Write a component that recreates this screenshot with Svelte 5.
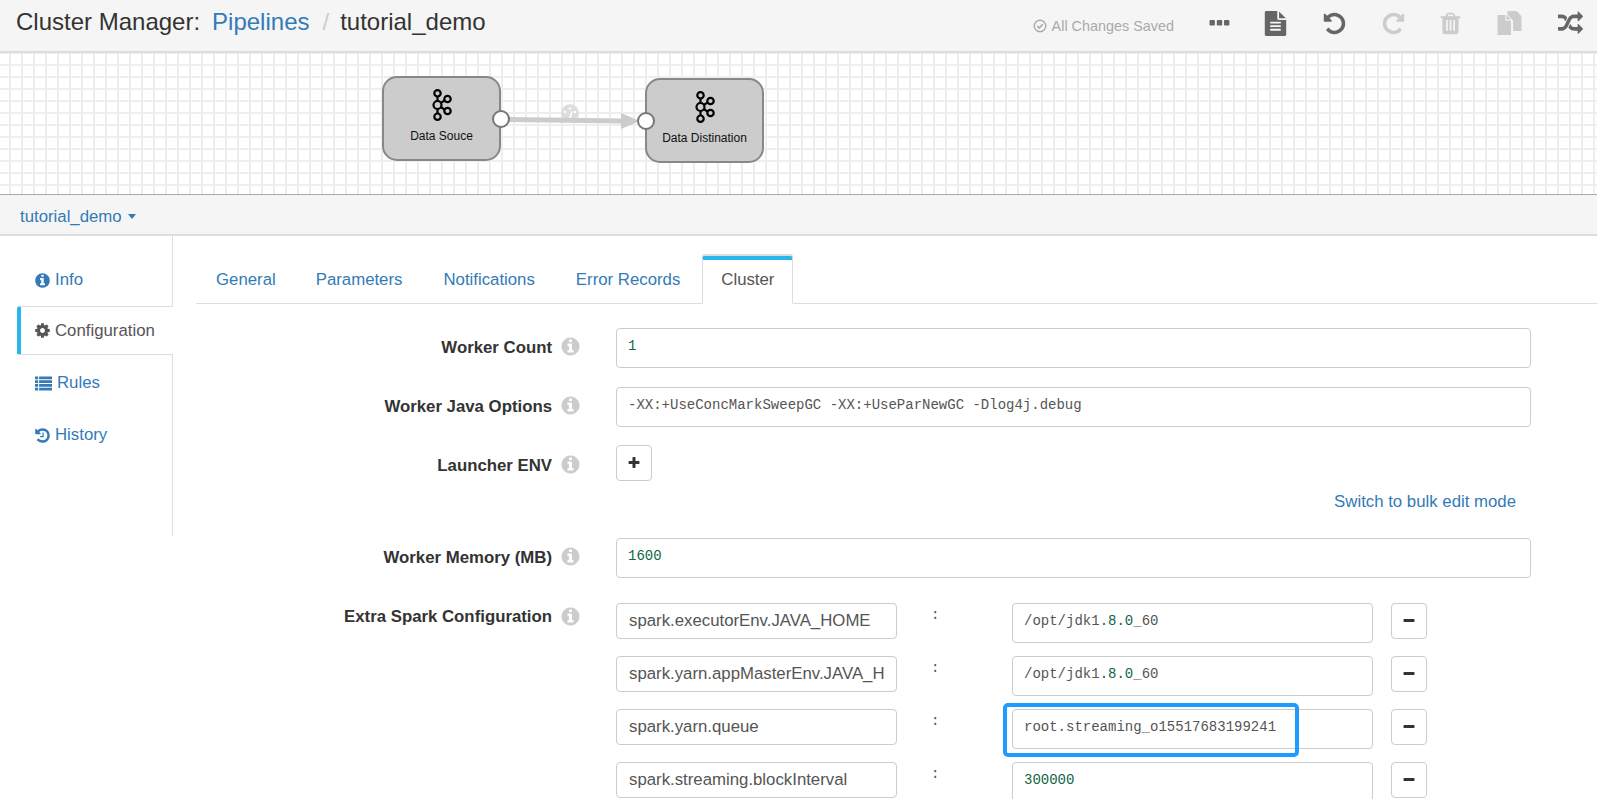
<script>
  const icons = {
    info: "M1152 1376v-160q0-14-9-23t-23-9h-96v-512q0-14-9-23t-23-9h-320q-14 0-23 9t-9 23v160q0 14 9 23t23 9h96v320h-96q-14 0-23 9t-9 23v160q0 14 9 23t23 9h448q14 0 23-9t9-23zm-128-896v-160q0-14-9-23t-23-9h-192q-14 0-23 9t-9 23v160q0 14 9 23t23 9h192q14 0 23-9t9-23zm640 416q0 209-103 385.5t-279.5 279.5-385.5 103-385.5-103-279.5-279.5-103-385.5 103-385.5 279.5-279.5 385.5-103 385.5 103 279.5 279.5 103 385.5z",
    cog: "M1152 896q0-106-75-181t-181-75-181 75-75 181 75 181 181 75 181-75 75-181zm512-109v222q0 12-8 23t-20 13l-185 28q-19 54-39 91 35 50 107 138 10 12 10 25t-9 23q-27 37-99 108t-94 71q-12 0-26-9l-138-108q-44 23-91 38-16 136-29 186-7 28-36 28h-222q-14 0-24.5-8.5t-11.5-21.5l-28-184q-49-16-90-37l-141 107q-10 9-25 9-14 0-25-11-126-114-165-168-7-10-7-23 0-12 8-23 15-21 51-66.5t54-70.5q-27-50-41-99l-183-27q-13-2-21-12.5t-8-23.5v-222q0-12 8-23t19-13l186-28q14-46 39-92-40-57-107-138-10-12-10-24 0-10 9-23 26-36 98.5-107.5t94.5-71.5q13 0 26 10l138 107q44-23 91-38 16-136 29-186 7-28 36-28h222q14 0 24.5 8.5t11.5 21.5l28 184q49 16 90 37l142-107q9-9 24-9 13 0 25 10 129 119 165 170 7 8 7 22 0 12-8 23-15 21-51 66.5t-54 70.5q26 50 41 98l183 28q13 2 21 12.5t8 23.5z",
    list: "M0 158h330v290h-330zM435 158h1357v290h-1357zM0 553h330v290h-330zM435 553h1357v290h-1357zM0 948h330v290h-330zM435 948h1357v290h-1357zM0 1343h330v290h-330zM435 1343h1357v290h-1357z",
    undo: "M1664 896q0 156-61 298t-164 245-245 164-298 61q-172 0-327-72.5t-264-204.5q-7-10-6.5-22.5t8.5-20.5l137-138q10-9 25-9 16 2 23 12 73 95 179 147t225 52q104 0 198.5-40.5t163.5-109.5 109.5-163.5 40.5-198.5-40.5-198.5-109.5-163.5-163.5-109.5-198.5-40.5q-98 0-188 35.5t-160 101.5l137 138q31 30 14 69-17 40-59 40h-448q-26 0-45-19t-19-45v-448q0-42 40-59 39-17 69 14l130 129q107-101 244.5-156.5t284.5-55.5q156 0 298 61t245 164 164 245 61 298z",
    history: "M1664 896q0 156-61 298t-164 245-245 164-298 61q-172 0-327-72.5t-264-204.5q-7-10-6.5-22.5t8.5-20.5l137-138q10-9 25-9 16 2 23 12 73 95 179 147t225 52q104 0 198.5-40.5t163.5-109.5 109.5-163.5 40.5-198.5-40.5-198.5-109.5-163.5-163.5-109.5-198.5-40.5q-98 0-188 35.5t-160 101.5l137 138q31 30 14 69-17 40-59 40h-448q-26 0-45-19t-19-45v-448q0-42 40-59 39-17 69 14l130 129q107-101 244.5-156.5t284.5-55.5q156 0 298 61t245 164 164 245 61 298zm-640-288v448q0 14-9 23t-23 9h-320q-14 0-23-9t-9-23v-64q0-14 9-23t23-9h224v-352q0-14 9-23t23-9h64q14 0 23 9t9 23z",
    file: "M1596 476q14 14 28 36h-472v-472q22 14 36 28zm-476 164h544v1056q0 40-28 68t-68 28h-1344q-40 0-68-28t-28-68v-1600q0-40 28-68t68-28h800v544q0 40 28 68t68 28zm160 736v-64q0-14-9-23t-23-9h-704q-14 0-23 9t-9 23v64q0 14 9 23t23 9h704q14 0 23-9t9-23zm0-256v-64q0-14-9-23t-23-9h-704q-14 0-23 9t-9 23v64q0 14 9 23t23 9h704q14 0 23-9t9-23zm0-256v-64q0-14-9-23t-23-9h-704q-14 0-23 9t-9 23v64q0 14 9 23t23 9h704q14 0 23-9t9-23z",
    trash: "M704 1376v-704q0-14-9-23t-23-9h-64q-14 0-23 9t-9 23v704q0 14 9 23t23 9h64q14 0 23-9t9-23zm256 0v-704q0-14-9-23t-23-9h-64q-14 0-23 9t-9 23v704q0 14 9 23t23 9h64q14 0 23-9t9-23zm256 0v-704q0-14-9-23t-23-9h-64q-14 0-23 9t-9 23v704q0 14 9 23t23 9h64q14 0 23-9t9-23zm-544-992h448l-48-117q-7-9-17-11h-317q-10 2-17 11zm928 32v64q0 14-9 23t-23 9h-96v948q0 83-47 143.5t-113 60.5h-832q-66 0-113-58.5t-47-141.5v-952h-96q-14 0-23-9t-9-23v-64q0-14 9-23t23-9h309l70-167q15-37 54-63t79-26h320q40 0 79 26t54 63l70 167h309q14 0 23 9t9 23z",
    copy: "M745 0h640l370 370v1060h-600v-750l-410-410zM1460 60l240 240h-240zM40 290h560v400h400v1030h-960zM680 290l320 320h-320z",
    random: "M666 481q-60 92-137 273-22-45-37-72.5t-40.5-63.5-51-56.5-63-35-81.5-14.5h-224q-14 0-23-9t-9-23v-192q0-14 9-23t23-9h224q250 0 410 225zm1126 799q0 14-9 23l-320 320q-9 9-23 9-13 0-22.5-9.5t-9.5-22.5v-192q-32 0-85 .5t-81 1-73-1-71-5-64-10.5-63-18.5-58-28.5-59-40-55-53.5-56-69.5q59-93 136-273 22 45 37 72.5t40.5 63.5 51 56.5 63 35 81.5 14.5h256v-192q0-14 9-23t23-9q12 0 24 10l319 319q9 9 9 23zm0-896q0 14-9 23l-320 320q-9 9-23 9-13 0-22.5-9.5t-9.5-22.5v-192h-256q-48 0-87 15t-69 45-51 61.5-45 77.5q-32 62-78 171-29 66-49.5 111t-54 105-64 100-74 83-90 68.5-106.5 42-128 16.5h-224q-14 0-23-9t-9-23v-192q0-14 9-23t23-9h224q48 0 87-15t69-45 51-61.5 45-77.5q32-62 78-171 29-66 49.5-111t54-105 64-100 74-83 90-68.5 106.5-42 128-16.5h256v-192q0-14 9-23t23-9q12 0 24 10l319 319q9 9 9 23z",
    plus: "M1600 736v192q0 40-28 68t-68 28h-416v416q0 40-28 68t-68 28h-192q-40 0-68-28t-28-68v-416h-416q-40 0-68-28t-28-68v-192q0-40 28-68t68-28h416v-416q0-40 28-68t68-28h192q40 0 68 28t28 68v416h416q40 0 68 28t28 68z",
    minus: "M1600 736v192q0 40-28 68t-68 28h-1216q-40 0-68-28t-28-68v-192q0-40 28-68t68-28h1216q40 0 68 28t28 68z",
  };

  const tools = [
    { d: icons.file, cls: "on" },
    { d: icons.undo, cls: "on" },
    { d: icons.undo, cls: "off flip" },
    { d: icons.trash, cls: "off nudge" },
    { d: icons.copy, cls: "off" },
    { d: icons.random, cls: "on last" },
  ];

  const sideItems = [
    { label: "Info", d: icons.info },
    { label: "Configuration", d: icons.cog, active: true },
    { label: "Rules", d: icons.list, wide: true },
    { label: "History", d: icons.history },
  ];

  const tabs = ["General", "Parameters", "Notifications", "Error Records", "Cluster"];

  const nodes = [
    { label: "Data Souce", x: 382, y: 23, port: "right" },
    { label: "Data Distination", x: 645, y: 25, port: "left" },
  ];

  const sparkRows = [
    { key: "spark.executorEnv.JAVA_HOME", parts: [["/opt/jdk1", ""], [".8.0", "num"], ["_60", ""]] },
    { key: "spark.yarn.appMasterEnv.JAVA_HOME", parts: [["/opt/jdk1", ""], [".8.0", "num"], ["_60", ""]] },
    { key: "spark.yarn.queue", parts: [["root.streaming_o15517683199241", ""]], marked: true },
    { key: "spark.streaming.blockInterval", parts: [["300000", "num"]] },
  ];
</script>

{#snippet fa(d, size)}
  <svg class="fa" width={size} height={size} viewBox="0 0 1792 1792" fill="currentColor"><path {d} /></svg>
{/snippet}

{#snippet kafka(cx, cy)}
  <g fill="#ccc" stroke="#000" stroke-width="2.2">
    <path d="M{cx} {cy - 9}V{cy + 9}M{cx + 3} {cy - 2}L{cx + 8} {cy - 5}M{cx + 3} {cy + 2}L{cx + 8} {cy + 5}" fill="none" />
    <circle {cx} cy={cy - 11.7} r="3.2" />
    <circle {cx} cy={cy + 11.7} r="3.2" />
    <circle {cx} {cy} r="4" />
    <circle cx={cx + 10} cy={cy - 6} r="3.2" />
    <circle cx={cx + 10} cy={cy + 6} r="3.2" />
  </g>
{/snippet}

{#snippet field(label, body)}
  <div class="field">
    <span class="field-label">{label}</span>
    <span class="help">{@render fa(icons.info, 21)}</span>
    <div class="control">{@render body()}</div>
  </div>
{/snippet}

{#snippet workerCount()}<div class="code tall"><span class="num">1</span></div>{/snippet}
{#snippet javaOpts()}<div class="code tall">-XX:+UseConcMarkSweepGC -XX:+UseParNewGC -Dlog4j.debug</div>{/snippet}
{#snippet launcherEnv()}<button class="icon-btn add">{@render fa(icons.plus, 14)}</button>{/snippet}
{#snippet memory()}<div class="code tall"><span class="num">1600</span></div>{/snippet}
{#snippet sparkConf()}
  {#each sparkRows as row}
    <div class="kv-row">
      <input class="kv-key" value={row.key} readonly />
      <span class="kv-sep">:</span>
      <div class="kv-value">
        <div class="code tall">{#each row.parts as [text, cls]}<span class={cls}>{text}</span>{/each}</div>
        {#if row.marked}<div class="marker"></div>{/if}
      </div>
      <button class="icon-btn">{@render fa(icons.minus, 14)}</button>
    </div>
  {/each}
{/snippet}

<div class="page">
  <header class="topbar">
    <div class="crumbs">
      <span>Cluster Manager:</span>
      <a href="#pipelines" class="crumb-link">Pipelines</a>
      <span class="slash">/</span>
      <span>tutorial_demo</span>
    </div>
    <div class="status">
      <svg width="14" height="14" viewBox="0 0 14 14" fill="none" stroke="currentColor"><circle cx="7" cy="7" r="5.8" stroke-width="1.4" /><path d="M4.2 7l2 2 3.6-3.8" stroke-width="1.6" /></svg>
      All Changes Saved
    </div>
    <div class="toolbar">
      <svg class="more" width="25" height="25" viewBox="0 0 25 25" fill="#666"><rect x="2.5" y="9" width="5.4" height="5.4" rx="1" /><rect x="9.8" y="9" width="5.4" height="5.4" rx="1" /><rect x="17" y="9" width="5.4" height="5.4" rx="1" /></svg>
      {#each tools as t}
        <span class="tool {t.cls}">{@render fa(t.d, 25)}</span>
      {/each}
    </div>
  </header>

  <div class="canvas">
    <svg class="edges" width="800" height="141">
      <path d="M563 66a9 9 0 1 1 14 0z" fill="#ddd" />
      <g fill="#fff"><circle cx="565" cy="59" r="1.2" /><circle cx="570" cy="55.5" r="1.2" /><circle cx="575" cy="59" r="1.2" /><path d="M569 65l2.5-7 1 .4-1.5 6.6z" /></g>
      <path d="M505 66.5L622 68" stroke="#ccc" stroke-width="5" fill="none" />
      <path d="M621 60l19 8-19 8z" fill="#ccc" />
    </svg>
    {#each nodes as n}
      <div class="node" style="left:{n.x}px;top:{n.y}px">
        <svg width="34" height="36" viewBox="0 0 34 36">{@render kafka(12.5, 18)}</svg>
        <span>{n.label}</span>
        <i class="port {n.port}"></i>
      </div>
    {/each}
  </div>

  <div class="subbar">
    <a href="#demo" class="sub-link">tutorial_demo</a><i class="caret"></i>
  </div>

  <div class="body">
    <aside class="sidebar">
      {#each sideItems as item}
        <div class="side-item" class:active={item.active} class:wide={item.wide}>
          {@render fa(item.d, 17)}
          <span>{item.label}</span>
        </div>
      {/each}
    </aside>

    <main class="content">
      <nav class="tabs">
        {#each tabs as tab, i}
          <div class="tab" class:current={i === tabs.length - 1}>{tab}</div>
        {/each}
      </nav>

      <form class="form">
        {@render field("Worker Count", workerCount)}
        {@render field("Worker Java Options", javaOpts)}
        {@render field("Launcher ENV", launcherEnv)}
        <div class="bulk"><a href="#bulk">Switch to bulk edit mode</a></div>
        {@render field("Worker Memory (MB)", memory)}
        {@render field("Extra Spark Configuration", sparkConf)}
      </form>
    </main>
  </div>
</div>

<style>
  :global(body) {
    margin: 0;
    background: #fff;
  }

  .page {
    height: 100vh;
    overflow: hidden;
    font-family: "Liberation Sans", Arial, sans-serif;
    font-size: 16.8px;
    color: #333;
  }

  a {
    color: #337ab7;
    text-decoration: none;
  }

  .fa {
    display: block;
    flex: none;
  }

  /* Top bar */
  .topbar {
    height: 51px;
    display: flex;
    align-items: center;
    background: #f5f5f5;
    border-bottom: 2px solid #ddd;
    padding: 0 14px 0 16px;
  }

  .crumbs {
    flex: 1;
    display: flex;
    font-size: 24px;
    margin-top: -7px;
    color: #333;
  }

  .crumb-link {
    margin-left: 12px;
  }

  .slash {
    color: #ccc;
    margin: 0 11px 0 13px;
  }

  .status {
    display: flex;
    align-items: center;
    gap: 5px;
    font-size: 14.4px;
    color: #aaa;
    margin-right: 33px;
  }

  .toolbar {
    display: flex;
    gap: 34px;
    align-items: center;
    margin-top: -4px;
  }

  .more {
    margin-right: -3px;
  }

  .tool.on { color: #666; }
  .tool.off { color: #ccc; }
  .tool.flip { transform: scaleX(-1); }
  .tool.nudge { margin-left: -2.5px; }
  .tool.last { margin-left: 2.5px; }

  /* Pipeline canvas */
  .canvas {
    position: relative;
    height: 141px;
    background-color: #fff;
    background-image:
      linear-gradient(#eee 2px, transparent 2px),
      linear-gradient(90deg, #eee 2px, transparent 2px);
    background-size: 12px 12px;
    background-position: 9px 11px;
    border-bottom: 1px solid #aaa;
  }

  .edges {
    position: absolute;
    left: 0;
    top: 0;
  }

  .node {
    position: absolute;
    box-sizing: border-box;
    width: 119px;
    height: 85px;
    display: flex;
    flex-direction: column;
    align-items: center;
    padding-top: 9px;
    background: #ccc;
    border: 2px solid #888;
    border-radius: 15px;
    font-size: 12px;
    color: #111;
  }

  .node span {
    margin-top: 6px;
  }

  .port {
    position: absolute;
    box-sizing: border-box;
    width: 18px;
    height: 18px;
    top: 32px;
    background: #fff;
    border: 2px solid #777;
    border-radius: 50%;
  }

  .port.right { right: -11px; }
  .port.left { left: -10px; }

  /* Sub bar */
  .subbar {
    box-sizing: border-box;
    height: 41px;
    display: flex;
    align-items: center;
    padding: 4px 0 0 20px;
    background: #f5f5f5;
    border-bottom: 2px solid #ddd;
  }

  .caret {
    margin-left: 6px;
    border-top: 5px solid #337ab7;
    border-left: 4.5px solid transparent;
    border-right: 4.5px solid transparent;
  }

  /* Body */
  .body {
    display: flex;
  }

  .sidebar {
    box-sizing: border-box;
    flex: none;
    width: 173px;
    height: 300px;
    padding-top: 18px;
    border-right: 1px solid #ddd;
  }

  .side-item {
    box-sizing: border-box;
    height: 52px;
    margin-left: 17px;
    padding-left: 17px;
    display: flex;
    align-items: center;
    gap: 4px;
    color: #337ab7;
  }

  .side-item.wide {
    padding-left: 18px;
    gap: 5px;
  }

  .side-item.active {
    height: 49px;
    margin: 0 -1px 2px 17px;
    padding-left: 13px;
    background: #fff;
    color: #555;
    border: 1px solid #ddd;
    border-left: 4px solid #29b6ea;
    border-right: 0;
    border-radius: 3px 0 0 3px;
  }

  .content {
    flex: 1;
    min-width: 0;
    padding-left: 23px;
  }

  /* Tabs */
  .tabs {
    display: flex;
    height: 68px;
    padding-top: 20px;
    box-sizing: border-box;
    border-bottom: 1px solid #ddd;
  }

  .tab {
    box-sizing: border-box;
    height: 47px;
    padding: 10px 20px 0 19px;
    color: #337ab7;
    border: 1px solid transparent;
    border-top-width: 4px;
  }

  .tab:first-child {
    padding-right: 19px;
  }

  .tab.current {
    height: 48px;
    padding-left: 18px;
    padding-right: 18px;
    margin-left: 1px;
    color: #555;
    background: #fff;
    border-color: #29b6ea #ddd #fff;
    border-radius: 3px 3px 0 0;
    box-shadow: 0 -2px 0 #ddd;
  }

  /* Form */
  .form {
    padding-top: 24px;
  }

  .field {
    display: flex;
    margin-bottom: 19px;
  }

  .field:last-child {
    margin-top: 25px;
  }

  .field-label {
    flex: none;
    width: 356px;
    text-align: right;
    font-weight: bold;
    line-height: 21px;
    padding-top: 9px;
  }

  .field:last-child .field-label {
    padding-top: 3px;
  }

  .help {
    flex: none;
    width: 64px;
    padding: 8px 0 0 8px;
    box-sizing: border-box;
    color: #ccc;
  }

  .field:last-child .help {
    padding-top: 3px;
  }

  .control {
    width: 915px;
  }

  .code {
    box-sizing: border-box;
    padding: 7px 11px 0;
    font-family: "Liberation Mono", monospace;
    font-size: 14px;
    line-height: 21px;
    color: #555;
    background: #fff;
    border: 1px solid #ccc;
    border-radius: 4px;
    white-space: pre;
    overflow: hidden;
  }

  .code.tall {
    height: 40px;
  }

  .num {
    color: #164;
  }

  .icon-btn {
    display: flex;
    align-items: center;
    justify-content: center;
    width: 36px;
    height: 36px;
    padding: 0;
    color: #333;
    background: #fff;
    border: 1px solid #ccc;
    border-radius: 4px;
  }

  .icon-btn.add {
    margin-top: -1px;
  }

  .bulk {
    text-align: right;
    width: 1320px;
    margin: -8px 0 26px;
    line-height: 20px;
  }

  /* Key/value rows */
  .kv-row {
    display: flex;
    height: 40px;
    margin-bottom: 13px;
  }

  .kv-key {
    box-sizing: border-box;
    flex: none;
    width: 281px;
    height: 36px;
    padding: 0 12px;
    font-family: "Liberation Sans", Arial, sans-serif;
    font-size: 16.8px;
    color: #555;
    background: #fff;
    border: 1px solid #ccc;
    border-radius: 4px;
    outline: none;
  }

  .kv-sep {
    flex: none;
    width: 115px;
    padding: 4px 0 0 34px;
    box-sizing: border-box;
    font-family: "Liberation Mono", monospace;
    font-size: 14px;
    line-height: 16px;
    color: #555;
  }

  .kv-value {
    position: relative;
    flex: none;
    width: 361px;
    margin-right: 18px;
  }

  .marker {
    position: absolute;
    left: -9px;
    top: -6px;
    width: 296px;
    height: 54px;
    box-sizing: border-box;
    border: 4px solid #1e9bff;
    border-radius: 5px;
    pointer-events: none;
  }
</style>
